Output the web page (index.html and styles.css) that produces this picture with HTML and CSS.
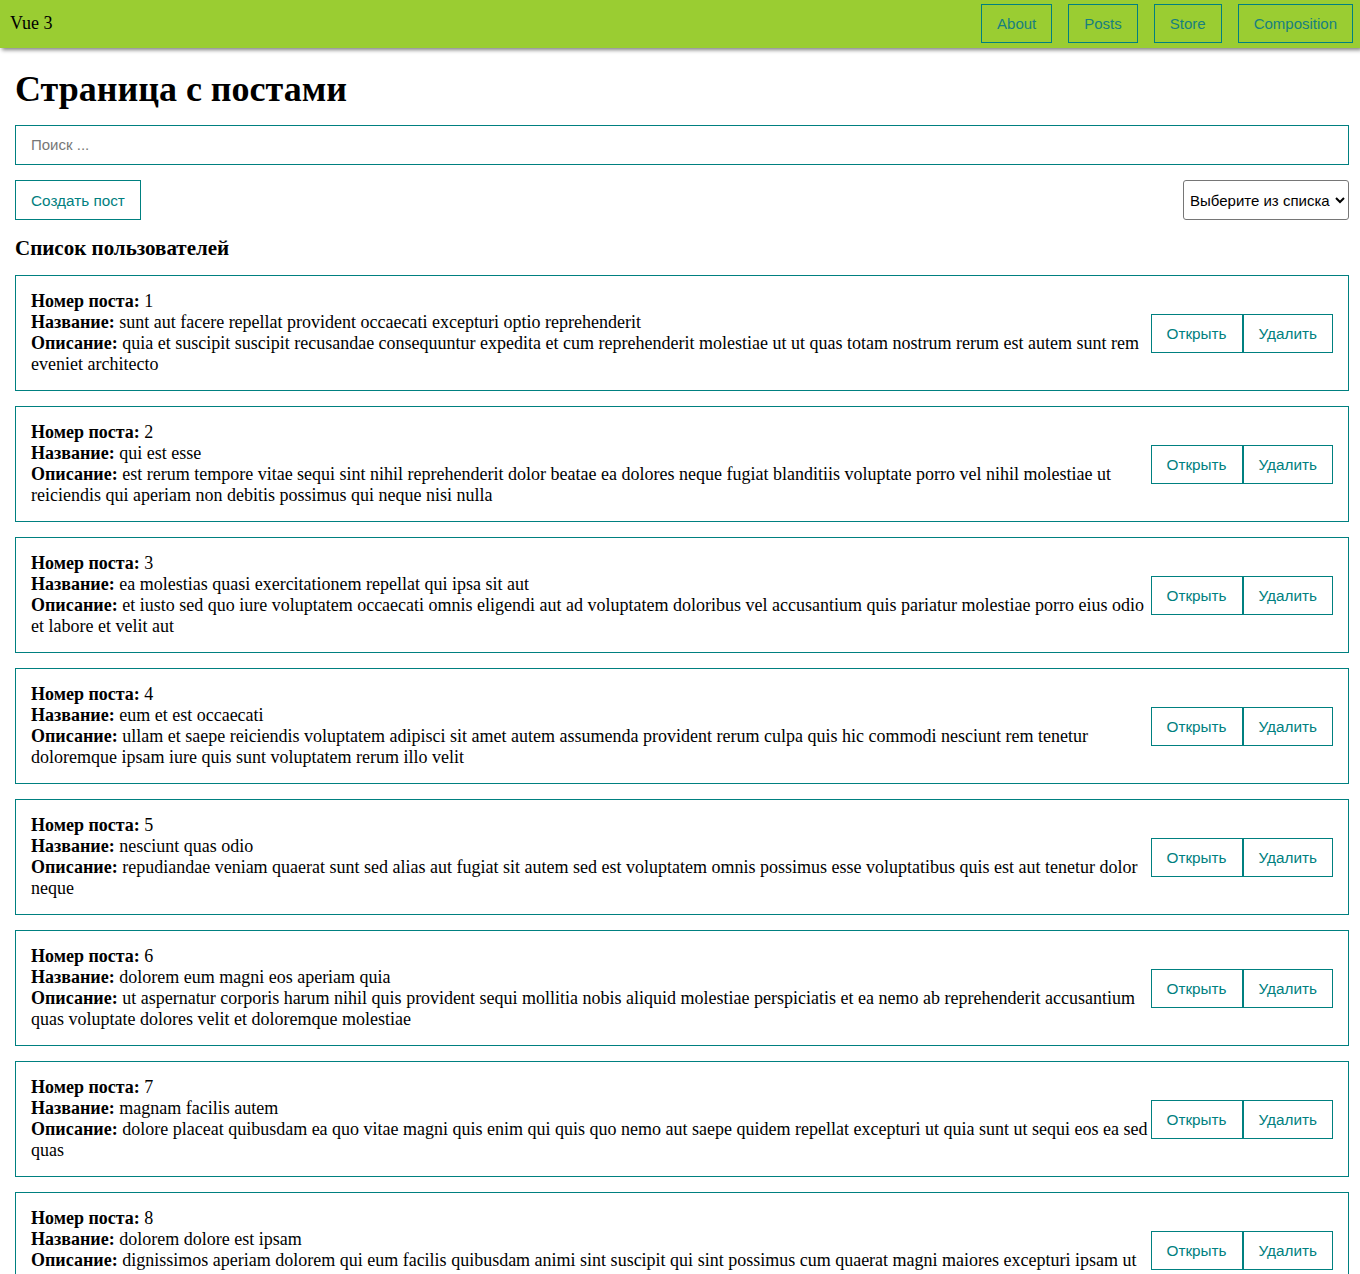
FILE: index.html
```html
<!DOCTYPE html>
<html lang="ru">
<head>
<meta charset="utf-8">
<title>Vue 3</title>
<link rel="stylesheet" href="styles.css">
</head>
<body>
<div class="navbar">
  <div class="brand">Vue 3</div>
  <div class="navbar__btns">
    <button class="btn">About</button>
    <button class="btn">Posts</button>
    <button class="btn">Store</button>
    <button class="btn">Composition</button>
  </div>
</div>
<div class="app">
  <h1 class="title">Страница с постами</h1>
  <input class="input" type="text" placeholder="Поиск ...">
  <div class="app__btns">
    <button class="btn">Создать пост</button>
    <select class="select">
      <option>Выберите из списка</option>
    </select>
  </div>
  <h3 class="subtitle">Список пользователей</h3>
  <div class="post-list">
    <div class="post">
      <div class="post__text">
        <div><strong>Номер поста:</strong> 1</div>
        <div><strong>Название:</strong> sunt aut facere repellat provident occaecati excepturi optio reprehenderit</div>
        <div><strong>Описание:</strong> quia et suscipit suscipit recusandae consequuntur expedita et cum reprehenderit molestiae ut ut quas totam nostrum rerum est autem sunt rem eveniet architecto</div>
      </div>
      <div class="post__btns"><button class="btn">Открыть</button><button class="btn">Удалить</button></div>
    </div>
    <div class="post">
      <div class="post__text">
        <div><strong>Номер поста:</strong> 2</div>
        <div><strong>Название:</strong> qui est esse</div>
        <div><strong>Описание:</strong> est rerum tempore vitae sequi sint nihil reprehenderit dolor beatae ea dolores neque fugiat blanditiis voluptate porro vel nihil molestiae ut reiciendis qui aperiam non debitis possimus qui neque nisi nulla</div>
      </div>
      <div class="post__btns"><button class="btn">Открыть</button><button class="btn">Удалить</button></div>
    </div>
    <div class="post">
      <div class="post__text">
        <div><strong>Номер поста:</strong> 3</div>
        <div><strong>Название:</strong> ea molestias quasi exercitationem repellat qui ipsa sit aut</div>
        <div><strong>Описание:</strong> et iusto sed quo iure voluptatem occaecati omnis eligendi aut ad voluptatem doloribus vel accusantium quis pariatur molestiae porro eius odio et labore et velit aut</div>
      </div>
      <div class="post__btns"><button class="btn">Открыть</button><button class="btn">Удалить</button></div>
    </div>
    <div class="post">
      <div class="post__text">
        <div><strong>Номер поста:</strong> 4</div>
        <div><strong>Название:</strong> eum et est occaecati</div>
        <div><strong>Описание:</strong> ullam et saepe reiciendis voluptatem adipisci sit amet autem assumenda provident rerum culpa quis hic commodi nesciunt rem tenetur doloremque ipsam iure quis sunt voluptatem rerum illo velit</div>
      </div>
      <div class="post__btns"><button class="btn">Открыть</button><button class="btn">Удалить</button></div>
    </div>
    <div class="post">
      <div class="post__text">
        <div><strong>Номер поста:</strong> 5</div>
        <div><strong>Название:</strong> nesciunt quas odio</div>
        <div><strong>Описание:</strong> repudiandae veniam quaerat sunt sed alias aut fugiat sit autem sed est voluptatem omnis possimus esse voluptatibus quis est aut tenetur dolor neque</div>
      </div>
      <div class="post__btns"><button class="btn">Открыть</button><button class="btn">Удалить</button></div>
    </div>
    <div class="post">
      <div class="post__text">
        <div><strong>Номер поста:</strong> 6</div>
        <div><strong>Название:</strong> dolorem eum magni eos aperiam quia</div>
        <div><strong>Описание:</strong> ut aspernatur corporis harum nihil quis provident sequi mollitia nobis aliquid molestiae perspiciatis et ea nemo ab reprehenderit accusantium quas voluptate dolores velit et doloremque molestiae</div>
      </div>
      <div class="post__btns"><button class="btn">Открыть</button><button class="btn">Удалить</button></div>
    </div>
    <div class="post">
      <div class="post__text">
        <div><strong>Номер поста:</strong> 7</div>
        <div><strong>Название:</strong> magnam facilis autem</div>
        <div><strong>Описание:</strong> dolore placeat quibusdam ea quo vitae magni quis enim qui quis quo nemo aut saepe quidem repellat excepturi ut quia sunt ut sequi eos ea sed quas</div>
      </div>
      <div class="post__btns"><button class="btn">Открыть</button><button class="btn">Удалить</button></div>
    </div>
    <div class="post">
      <div class="post__text">
        <div><strong>Номер поста:</strong> 8</div>
        <div><strong>Название:</strong> dolorem dolore est ipsam</div>
        <div><strong>Описание:</strong> dignissimos aperiam dolorem qui eum facilis quibusdam animi sint suscipit qui sint possimus cum quaerat magni maiores excepturi ipsam ut commodi dolor voluptatum modi aut vitae</div>
      </div>
      <div class="post__btns"><button class="btn">Открыть</button><button class="btn">Удалить</button></div>
    </div>
  </div>
</div>
</body>
</html>
```

FILE: styles.css
```css
* {
  margin: 0;
  padding: 0;
  box-sizing: border-box;
}

body {
  font-family: "Liberation Serif", "Times New Roman", serif;
  font-size: 16px;
  color: #000;
  background: #fff;
}

.navbar {
  height: 48px;
  background: #9acd32;
  box-shadow: 2px 2px 4px gray;
  display: flex;
  align-items: center;
  justify-content: space-between;
  padding: 0 7px 1px 10px;
}

.brand {
  font-size: 18px;
}

.navbar__btns {
  display: flex;
}

.navbar__btns .btn {
  margin-left: 16px;
  font-size: 15px;
  color: #17807f;
}

.btn {
  font-family: "Liberation Sans", Arial, sans-serif;
  font-size: 15.3px;
  line-height: 17px;
  padding: 10px 15px;
  background: none;
  color: teal;
  border: 1px solid teal;
  cursor: pointer;
}

.app {
  padding: 0 11px 20px 15px;
}

.title {
  font-size: 36px;
  font-weight: bold;
  line-height: 41px;
  margin-top: 21px;
}

.input {
  display: block;
  width: 100%;
  margin-top: 15px;
  padding: 10px 15px;
  font-family: "Liberation Sans", Arial, sans-serif;
  font-size: 15px;
  line-height: 18px;
  border: 1px solid teal;
  outline: none;
}

.input::placeholder {
  color: #777;
}

.app__btns {
  display: flex;
  justify-content: space-between;
  margin-top: 15px;
}

.select {
  font-family: "Liberation Sans", Arial, sans-serif;
  font-size: 15px;
  height: 40px;
  padding: 0 2px;
  border: 1px solid #767676;
  border-radius: 3px;
  background: #fff;
  color: #000;
}

.subtitle {
  font-size: 21px;
  font-weight: bold;
  line-height: 24px;
  margin: 16px 0 15px;
}

.post-list {
  display: flex;
  flex-direction: column;
  gap: 15px;
}

.post {
  display: flex;
  align-items: center;
  justify-content: space-between;
  padding: 15px;
  border: 1px solid teal;
}

.post__text {
  flex: 1;
  font-size: 18px;
  line-height: 21px;
}

.post__btns {
  display: flex;
  flex-shrink: 0;
}
```
